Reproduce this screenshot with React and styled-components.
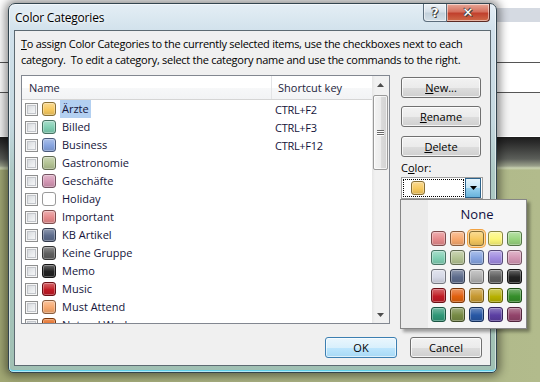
import React from 'react';
import styled, { createGlobalStyle } from 'styled-components';

const FONT = `"Open Sans", "Noto Sans", sans-serif`;

const GlobalStyle = createGlobalStyle`
  html, body { margin: 0; padding: 0; overflow: hidden; background: #b1ba8a; }
  body { font-family: ${FONT}; }
  * { box-sizing: border-box; }
`;

const Desktop = styled.div`
  position: relative;
  width: 540px;
  height: 382px;
  overflow: hidden;
  background: linear-gradient(90deg, #a2a874 0%, #aab282 40%, #b2bb8c 100%);
`;

const BackWindow = styled.div`
  position: absolute;
  left: 0;
  top: 0;
  width: 540px;
  height: 137px;
  background: #fff;
  display: flex;
  flex-direction: column;
  font-size: 12px;
  color: #222;
`;

const BackBand = styled.div`
  height: ${p => p.$h}px;
  flex: none;
  background: ${p => p.$bg || '#fff'};
  border-bottom: ${p => (p.$line ? '1px solid #555' : 'none')};
`;

const BackBar = styled.div`
  position: absolute;
  left: 0;
  top: 137px;
  width: 540px;
  height: 33px;
  background: linear-gradient(180deg, #1c1c1c 0, #2c2c2c 6px, #5c5f5a 22px, #9aa08a 29px, #c9d2b0 31px, #b4bc8e 33px);
`;

const Dialog = styled.div`
  position: absolute;
  left: 8px;
  top: 3px;
  width: 489px;
  height: 370px;
  display: flex;
  flex-direction: column;
  border: 1px solid #33454f;
  border-radius: 7px 7px 5px 5px;
  background: linear-gradient(180deg, #e4eef5 0px, #d2e2ec 26px, #c4d8df 120px, #adc9c4 170px, #a0c0b3 100%);
  box-shadow: 0 0 10px 3px rgba(0, 0, 0, 0.45), inset 0 0 0 1px rgba(255, 255, 255, 0.55), inset 0 -2px 0 #5ccfea;
`;

const TitleBar = styled.div`
  height: 26px;
  flex: none;
  display: flex;
  align-items: flex-start;
  justify-content: space-between;
  padding: 0 6px 0 6px;
`;

const Title = styled.div`
  margin-top: 5px;
  font-size: 12px;
  letter-spacing: -0.2px;
  color: #000;
  text-shadow: 0 0 6px #fff, 0 0 3px #fff;
`;

const CaptionButtons = styled.div`
  display: flex;
`;

const CaptionButton = styled.div`
  width: ${p => (p.$close ? 43 : 24)}px;
  height: 18px;
  border: 1px solid ${p => (p.$close ? '#5b2b25' : '#5c6d7c')};
  border-top: none;
  border-left-width: ${p => (p.$close ? 0 : 1)}px;
  border-radius: ${p => (p.$close ? '0 0 4px 0' : '0 0 0 4px')};
  background: ${p =>
    p.$close
      ? 'linear-gradient(180deg, #e8a898 0%, #d5705e 45%, #c1402d 55%, #cf6a48 100%)'
      : 'linear-gradient(180deg, #eef3f7 0%, #d7e1ea 45%, #c3d1dc 55%, #d4e0e8 100%)'};
  box-shadow: inset 0 0 0 1px rgba(255, 255, 255, 0.5);
  display: flex;
  align-items: center;
  justify-content: center;
  color: #fff;
  font-family: "DejaVu Sans", sans-serif;
  font-weight: bold;
  font-size: ${p => (p.$close ? 13 : 12)}px;
  text-shadow: 0 0 1px #333, 1px 1px 0 #444, -1px -1px 0 #555;
`;

const Client = styled.div`
  flex: 1;
  margin: 0 5px 6px 5px;
  border: 1px solid #5d6a72;
  background: #f0f0f0;
  display: flex;
  flex-direction: column;
  padding: 5px 8px 7px 6px;
  font-size: 11px;
  color: #000;
`;

const Intro = styled.p`
  margin: 0;
  line-height: 16px;
  font-size: 11px;
  letter-spacing: -0.27px;
  white-space: pre;
`;

const Acc = styled.span`
  text-decoration: underline;
  text-underline-offset: 1px;
`;

const Main = styled.div`
  display: flex;
  gap: 11px;
  margin-top: 7px;
`;

const ListBox = styled.div`
  width: 370px;
  height: 249px;
  border: 1px solid #828790;
  background: #fff;
  display: flex;
  overflow: hidden;
`;

const ListMain = styled.div`
  flex: 1;
  display: flex;
  flex-direction: column;
  overflow: hidden;
`;

const Header = styled.div`
  height: 24px;
  flex: none;
  display: flex;
  background: linear-gradient(180deg, #ffffff 0%, #ffffff 50%, #f7f8f9 50%, #f2f3f5 100%);
  border-bottom: 1px solid #d5d5d5;
`;

const HeaderCell = styled.div`
  width: ${p => (p.$w ? `${p.$w}px` : 'auto')};
  flex: ${p => (p.$w ? 'none' : 1)};
  padding-left: ${p => p.$pl}px;
  display: flex;
  align-items: center;
  border-right: ${p => (p.$sep ? '1px solid #e3e4e6' : 'none')};
  color: #1e1e3c;
`;

const Row = styled.div`
  height: 18px;
  flex: none;
  display: flex;
  align-items: center;
  color: #14143a;
`;

const NameCell = styled.div`
  width: 250px;
  flex: none;
  display: flex;
  align-items: center;
  padding-left: 3px;
`;

const Check = styled.div`
  width: 13px;
  height: 13px;
  flex: none;
  border: 1px solid #8e8f8f;
  background: linear-gradient(135deg, #cfd2d6 0%, #eceef0 60%, #fbfbfb 100%);
  box-shadow: inset 0 0 0 1px #f6f6f6, inset 0 0 0 2px #c3c6cb;
`;

const Swatch = styled.div`
  width: ${p => p.$size}px;
  height: ${p => p.$size}px;
  flex: none;
  border-radius: 3px;
  border: 1px solid ${p => (p.$none ? '#9a9a9a' : `color-mix(in srgb, ${p.$c} 55%, black)`)};
  background: ${p =>
    p.$none
      ? '#fff'
      : `linear-gradient(180deg, color-mix(in srgb, ${p.$c} 68%, white) 0%, ${p.$c} 55%, color-mix(in srgb, ${p.$c} 88%, black) 100%)`};
  box-shadow: ${p => (p.$sel ? '0 0 0 1px #fcd89c, 0 0 0 2px #f2a241' : 'inset 0 0 0 1px rgba(255,255,255,0.3)')};
`;

const ListSwatch = styled(Swatch)`
  margin-left: 4px;
`;

const Label = styled.span`
  margin-left: 4px;
  padding: 0 2px;
  line-height: 18px;
  background: ${p => (p.$sel ? '#b3d0f1' : 'transparent')};
  white-space: nowrap;
`;

const ShortcutCell = styled.div`
  padding-left: 3px;
  letter-spacing: -0.3px;
`;

const Scrollbar = styled.div`
  width: 17px;
  flex: none;
  background: linear-gradient(90deg, #e6e6e6 0, #f1f1f1 3px, #f1f1f1 100%);
  display: flex;
  flex-direction: column;
  align-items: center;
`;

const ArrowBox = styled.div`
  height: 17px;
  flex: none;
  width: 100%;
  display: flex;
  align-items: center;
  justify-content: center;
`;

const Thumb = styled.div`
  width: 15px;
  height: 75px;
  margin-top: 2px;
  border: 1px solid #9a9a9a;
  border-radius: 2px;
  background: linear-gradient(90deg, #f4f4f4 0%, #ececec 50%, #dcdcdc 51%, #d2d2d2 100%);
  box-shadow: inset 0 0 0 1px rgba(255, 255, 255, 0.7);
  display: flex;
  flex-direction: column;
  align-items: center;
  justify-content: center;
  gap: 1px;
`;

const Grip = styled.div`
  width: 7px;
  height: 1px;
  background: #6a6a6a;
  box-shadow: 0 1px 0 #fff;
`;

const ScrollSpacer = styled.div`
  flex: 1;
`;

const Side = styled.div`
  width: 81px;
  display: flex;
  flex-direction: column;
  padding-top: 2px;
`;

const Button = styled.div`
  width: ${p => p.$w || 80}px;
  height: 21px;
  flex: none;
  margin-top: ${p => p.$mt || 0}px;
  border: 1px solid ${p => (p.$default ? '#3c7fb1' : '#707070')};
  border-radius: 3px;
  background: ${p =>
    p.$default
      ? 'linear-gradient(180deg, #eaf6fd 0%, #d9f0fc 50%, #bee6fd 51%, #a7d9f5 100%)'
      : 'linear-gradient(180deg, #f2f2f2 0%, #ebebeb 50%, #dddddd 51%, #cfcfcf 100%)'};
  box-shadow: inset 0 0 0 1px ${p => (p.$default ? 'rgba(255,255,255,0.6)' : 'rgba(255,255,255,0.75)')};
  display: flex;
  align-items: center;
  justify-content: center;
  font-size: 11px;
  color: #000;
`;

const ColorLabel = styled.div`
  margin-top: 3px;
  line-height: 16px;
`;

const ComboWrap = styled.div`
  position: relative;
  margin-top: 1px;
  width: 82px;
  height: 22px;
  border: 1px solid #a0a0a0;
  background: #fff;
  display: flex;
  align-items: center;
  padding: 1px;
`;

const ComboField = styled.div`
  flex: 1;
  height: 18px;
  border: 1px dotted #000;
  display: flex;
  align-items: center;
  padding-left: 7px;
`;

const ComboArrow = styled.div`
  width: 16px;
  height: 20px;
  margin-left: 1px;
  border: 1px solid #2c628b;
  background: linear-gradient(180deg, #e5f4fc 0%, #c4e5f6 50%, #98d1ef 51%, #68b3db 100%);
  display: flex;
  align-items: center;
  justify-content: center;
`;

const Popup = styled.div`
  position: absolute;
  left: -2px;
  top: 21px;
  width: 127px;
  height: 130px;
  border: 1px solid #868686;
  background: linear-gradient(90deg, #ebebeb 0, #ebebeb 27px, #f5f5f5 27px);
  box-shadow: 3px 3px 3px rgba(0, 0, 0, 0.35);
  display: flex;
  flex-direction: column;
  z-index: 5;
`;

const NoneItem = styled.div`
  height: 26px;
  margin-left: 27px;
  display: flex;
  align-items: center;
  justify-content: center;
  font-size: 13px;
  color: #101040;
  padding-top: 1px;
`;

const PaletteGrid = styled.div`
  margin: 5px 0 0 30px;
  display: grid;
  grid-template-columns: repeat(5, 15px);
  grid-auto-rows: 15px;
  gap: 4px;
`;

const Footer = styled.div`
  margin-top: auto;
  display: flex;
  justify-content: flex-end;
  gap: 13px;
`;

const Tri = ({ up }) => (
  <svg width="7" height="4" viewBox="0 0 7 4">
    <path d={up ? 'M0 4 L3.5 0 L7 4 Z' : 'M0 0 L7 0 L3.5 4 Z'} fill="#4d4d4d" />
  </svg>
);

const COLORS = {
  red: '#e58a8c',
  orange: '#f7a86e',
  peach: '#f7c95e',
  yellow: '#fcf777',
  green: '#98d47f',
  teal: '#80cfb3',
  olive: '#b3c393',
  blue: '#86a4e0',
  purple: '#a08be0',
  maroon: '#d396b3',
  steel: '#d5d8e6',
  darkSteel: '#5d6c8c',
  gray: '#b0b0b0',
  darkGray: '#5f5f5f',
  black: '#222222',
  darkRed: '#c11a25',
  darkOrange: '#e2620d',
  darkPeach: '#c79930',
  darkYellow: '#b9b300',
  darkGreen: '#368f2b',
  darkTeal: '#2f9878',
  darkOlive: '#778b45',
  darkBlue: '#2858a5',
  darkPurple: '#5c3fa3',
  darkMaroon: '#93446b',
};

const PALETTE = [
  'red', 'orange', 'peach', 'yellow', 'green',
  'teal', 'olive', 'blue', 'purple', 'maroon',
  'steel', 'darkSteel', 'gray', 'darkGray', 'black',
  'darkRed', 'darkOrange', 'darkPeach', 'darkYellow', 'darkGreen',
  'darkTeal', 'darkOlive', 'darkBlue', 'darkPurple', 'darkMaroon',
];

const CATEGORIES = [
  { name: 'Ärzte', color: 'peach', key: 'CTRL+F2', sel: true },
  { name: 'Billed', color: 'teal', key: 'CTRL+F3' },
  { name: 'Business', color: 'blue', key: 'CTRL+F12' },
  { name: 'Gastronomie', color: 'olive' },
  { name: 'Geschäfte', color: 'maroon' },
  { name: 'Holiday', color: null },
  { name: 'Important', color: 'red' },
  { name: 'KB Artikel', color: 'darkSteel' },
  { name: 'Keine Gruppe', color: 'darkGray' },
  { name: 'Memo', color: 'black' },
  { name: 'Music', color: 'darkRed' },
  { name: 'Must Attend', color: 'orange' },
  { name: 'Natural Work', color: 'darkOrange' },
];

export default function App() {
  return (
    <Desktop>
      <GlobalStyle />
      <BackWindow>
        <BackBand $h={8} />
        <BackBand $h={14} $bg="linear-gradient(90deg, #fff 0, #fff 60%, #d5dae2 60%)" />
        <BackBand $h={41} $line />
        <BackBand $h={30} $line />
        <BackBand $h={43} $bg="#f4f4f4" />
      </BackWindow>
      <BackBar />
      <Dialog>
        <TitleBar>
          <Title>Color Categories</Title>
          <CaptionButtons>
            <CaptionButton>?</CaptionButton>
            <CaptionButton $close>✕</CaptionButton>
          </CaptionButtons>
        </TitleBar>
        <Client>
          <Intro>
            <Acc>T</Acc>
            {'o assign Color Categories to the currently selected items, use the checkboxes next to each\ncategory.  To edit a category, select the category name and use the commands to the right.'}
          </Intro>
          <Main>
            <ListBox>
              <ListMain>
                <Header>
                  <HeaderCell $w={250} $pl={7} $sep>Name</HeaderCell>
                  <HeaderCell $pl={6}>Shortcut key</HeaderCell>
                </Header>
                {CATEGORIES.map(c => (
                  <Row key={c.name}>
                    <NameCell>
                      <Check />
                      <ListSwatch $size={14} $c={c.color ? COLORS[c.color] : '#fff'} $none={!c.color} />
                      <Label $sel={c.sel}>{c.name}</Label>
                    </NameCell>
                    <ShortcutCell>{c.key || ''}</ShortcutCell>
                  </Row>
                ))}
              </ListMain>
              <Scrollbar>
                <ArrowBox><Tri up /></ArrowBox>
                <Thumb>
                  <Grip />
                  <Grip />
                  <Grip />
                </Thumb>
                <ScrollSpacer />
                <ArrowBox><Tri /></ArrowBox>
              </Scrollbar>
            </ListBox>
            <Side>
              <Button><Acc>N</Acc>ew...</Button>
              <Button $mt={8}><Acc>R</Acc>ename</Button>
              <Button $mt={9}><Acc>D</Acc>elete</Button>
              <ColorLabel>C<Acc>o</Acc>lor:</ColorLabel>
              <ComboWrap>
                <ComboField>
                  <Swatch $size={14} $c={COLORS.peach} />
                </ComboField>
                <ComboArrow>
                  <svg width="7" height="4" viewBox="0 0 7 4">
                    <path d="M0 0 L7 0 L3.5 4 Z" fill="#000" />
                  </svg>
                </ComboArrow>
                <Popup>
                  <NoneItem>None</NoneItem>
                  <PaletteGrid>
                    {PALETTE.map(k => (
                      <Swatch key={k} $size={15} $c={COLORS[k]} $sel={k === 'peach'} />
                    ))}
                  </PaletteGrid>
                </Popup>
              </ComboWrap>
            </Side>
          </Main>
          <Footer>
            <Button $w={72} $default>OK</Button>
            <Button $w={72}>Cancel</Button>
          </Footer>
        </Client>
      </Dialog>
    </Desktop>
  );
}
